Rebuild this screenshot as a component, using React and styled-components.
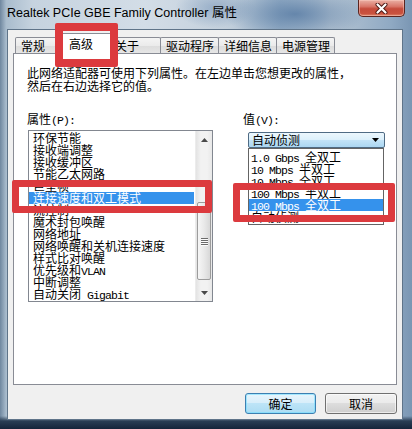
import React from "react";
import styled, { createGlobalStyle } from "styled-components";

const Global = createGlobalStyle`
  html, body { margin: 0; padding: 0; }
  body {
    width: 412px;
    height: 429px;
    overflow: hidden;
    font-family: "Noto Sans CJK SC", "Noto Sans", sans-serif;
  }
  #root { width: 412px; height: 429px; }
`;

const CJK = `"Noto Sans CJK SC", "Noto Sans", sans-serif`;

const Frame = styled.div`
  position: relative;
  box-sizing: border-box;
  width: 412px;
  height: 429px;
  display: flex;
  flex-direction: column;
  padding: 0 9px 9px 7px;
  overflow: hidden;
  background:
    linear-gradient(180deg, rgba(0,0,0,0) 0, rgba(0,0,0,0) 416px, #2a3e55 421px, #15243a 429px),
    radial-gradient(70px 26px at 295px 14px, rgba(90,125,165,0.85), rgba(90,125,165,0)),
    radial-gradient(40px 20px at 215px 8px, rgba(120,150,185,0.6), rgba(120,150,185,0)),
    linear-gradient(90deg, #6f879f 0, #a9bccd 1.5%, #c6d3df 8%, #d3dde7 35%, #c3d0dc 55%, #9fb6cc 68%, #b7c6d4 80%, #8fa9c3 95%, #7a96b3 100%);
`;

const TitleBar = styled.div`
  height: 29px;
  flex: none;
  display: flex;
  align-items: flex-start;
`;

const TitleText = styled.div`
  padding-top: 6px;
  font-family: "Liberation Sans", Arial, ${CJK};
  font-size: 12.5px;
  line-height: 15px;
  color: #000;
  white-space: nowrap;
`;

const CloseButton = styled.div`
  margin-left: auto;
  margin-right: -2px;
  width: 47px;
  height: 17px;
  box-sizing: border-box;
  border: 1px solid #5b2520;
  border-top: none;
  border-radius: 0 0 5px 5px;
  background: linear-gradient(180deg, #eab0a4 0%, #d9776a 40%, #c54b3b 55%, #c9523f 85%, #e08a6e 100%);
  box-shadow: inset 0 0 0 1px rgba(255, 210, 200, 0.45);
  display: flex;
  align-items: center;
  justify-content: center;
`;

const Client = styled.div`
  flex: 1;
  min-height: 0;
  display: flex;
  flex-direction: column;
  border: 1px solid #5f7489;
  background: #f0f0f0;
  padding: 3px 5px 5px 5px;
`;

const TabStrip = styled.div`
  height: 20px;
  flex: none;
  display: flex;
  align-items: flex-end;
  padding-left: 2px;
`;

const Tab = styled.div`
  position: relative;
  box-sizing: border-box;
  width: ${(p) => p.$w}px;
  height: ${(p) => (p.$active ? 21 : 16)}px;
  margin: ${(p) => (p.$active ? "0 -2px -1px -2px" : p.$first ? "0" : "0 0 0 -1px")};
  padding: ${(p) => (p.$active ? "2px 0 0 8px" : "0 0 0 5px")};
  border: 1px solid #898c95;
  border-bottom: none;
  border-radius: 2px 2px 0 0;
  background: ${(p) =>
    p.$active ? "#ffffff" : "linear-gradient(180deg, #f4f4f4 0%, #ebebeb 50%, #dcdcdc 51%, #e6e6e6 100%)"};
  z-index: ${(p) => (p.$active ? 2 : 1)};
  font-family: ${CJK};
  font-size: 12px;
  line-height: 15px;
  color: #000;
  white-space: nowrap;
`;

const Panel = styled.div`
  flex: none;
  height: 332px;
  box-sizing: border-box;
  border: 1px solid #898c95;
  background: #ffffff;
  padding: 12px 0 0 13px;
  display: flex;
  flex-direction: column;
`;

const Description = styled.div`
  font-family: ${CJK};
  font-size: 12px;
  line-height: 13px;
  color: #000;
  white-space: nowrap;
`;

const Columns = styled.div`
  display: flex;
  margin-top: 21px;
`;

const LeftCol = styled.div`
  width: 186px;
  display: flex;
  flex-direction: column;
`;

const RightCol = styled.div`
  margin-left: 30px;
  display: flex;
  flex-direction: column;
`;

const Label = styled.div`
  font-family: ${CJK};
  font-size: 12px;
  line-height: 12px;
  color: #000;
  white-space: nowrap;
`;

const Latin = styled.span`
  font-family: "Liberation Mono", "DejaVu Sans Mono", monospace;
  font-size: 11.5px;
  letter-spacing: -0.9px;
`;

function Mixed({ text }) {
  const parts = text.split(/([\x20-\x7e]+)/).filter(Boolean);
  return parts.map((p, i) =>
    /^[\x20-\x7e]+$/.test(p) ? <Latin key={i}>{p}</Latin> : <React.Fragment key={i}>{p}</React.Fragment>
  );
}

const ListBox = styled.div`
  margin: 3px 0 0 1px;
  width: 185px;
  height: 172px;
  box-sizing: border-box;
  border: 1px solid #828790;
  background: #fff;
  display: flex;
`;

const Items = styled.div`
  flex: 1;
  padding-top: 1px;
  padding-right: 1px;
  overflow: hidden;
`;

const Item = styled.div`
  height: 12px;
  padding-left: ${(p) => p.$pad}px;
  font-family: ${CJK};
  font-size: 12px;
  line-height: 12px;
  white-space: nowrap;
  color: ${(p) => (p.$selected ? "#ffffff" : "#000000")};
  background: ${(p) => (p.$selected ? "#3592ec" : "transparent")};
`;

const ScrollBar = styled.div`
  width: 16px;
  display: flex;
  flex-direction: column;
  background: linear-gradient(90deg, #e3e3e3 0%, #f2f2f2 30%, #f2f2f2 70%, #e8e8e8 100%);
  border-left: 1px solid #ececec;
`;

const ArrowButton = styled.div`
  height: 17px;
  flex: none;
  display: flex;
  align-items: center;
  justify-content: center;
`;

const Track = styled.div`
  flex: 1;
  display: flex;
  flex-direction: column;
  padding: ${(p) => p.$top}px 1px 0 1px;
`;

const Thumb = styled.div`
  height: ${(p) => p.$h}px;
  box-sizing: border-box;
  border: 1px solid #9c9c9c;
  border-radius: 2px;
  background: linear-gradient(90deg, #f6f6f6 0%, #e9e9e9 50%, #d8d8d8 100%);
  display: flex;
  flex-direction: column;
  align-items: center;
  justify-content: center;
  gap: 1px;
`;

const Grip = styled.div`
  width: 7px;
  height: 1px;
  background: #6b6b6b;
  box-shadow: 0 1px 0 #fbfbfb;
`;

const ComboWrap = styled.div`
  position: relative;
  margin: 5px 0 0 5px;
  width: 137px;
`;

const Combo = styled.div`
  height: 16px;
  box-sizing: border-box;
  border: 1px solid #4f6b84;
  border-radius: 2px;
  background: linear-gradient(180deg, #ecf7fd 0%, #dcf0fb 48%, #c2e3f7 52%, #abd6f1 100%);
  display: flex;
  align-items: center;
  padding: 0 5px 0 3px;
  font-family: ${CJK};
  font-size: 12px;
  line-height: 14px;
  color: #000;
`;

const ComboText = styled.span`
  flex: 1;
`;

const DropList = styled.div`
  position: absolute;
  top: 16px;
  left: 0;
  width: 136px;
  box-sizing: border-box;
  border: 1px solid #646464;
  background: #fff;
  padding: 2px 0 1px 0;
  z-index: 3;
`;

const ButtonRow = styled.div`
  display: flex;
  justify-content: flex-end;
  gap: 9px;
  margin-top: 8px;
`;

const Button = styled.div`
  width: ${(p) => p.$w}px;
  height: 21px;
  box-sizing: border-box;
  border: 1px solid ${(p) => (p.$primary ? "#3c7fb1" : "#707070")};
  border-radius: 3px;
  background: ${(p) =>
    p.$primary
      ? "linear-gradient(180deg, #e8f5fc 0%, #d8eefa 45%, #bde4f7 50%, #acdcf3 100%)"
      : "linear-gradient(180deg, #f2f2f2 0%, #ebebeb 45%, #dddddd 50%, #cfcfcf 100%)"};
  box-shadow: inset 0 0 0 1px ${(p) => (p.$primary ? "rgba(110,220,255,0.55)" : "rgba(255,255,255,0.6)")};
  display: flex;
  align-items: center;
  justify-content: center;
  font-family: ${CJK};
  font-size: 12px;
  color: #000;
`;

const Mark = styled.div`
  position: absolute;
  left: ${(p) => p.$x}px;
  top: ${(p) => p.$y}px;
  width: ${(p) => p.$w}px;
  height: ${(p) => p.$h}px;
  box-sizing: border-box;
  border: ${(p) => p.$t}px solid #dc3a3e;
  border-radius: 2px;
  z-index: 10;
`;

const tabs = [
  { label: "常规", w: 47 },
  { label: "高级", w: 52, active: true },
  { label: "关于", w: 52 },
  { label: "驱动程序", w: 59 },
  { label: "详细信息", w: 59 },
  { label: "电源管理", w: 59 },
];

const properties = [
  "环保节能",
  "接收端调整",
  "接收缓冲区",
  "节能乙太网路",
  "巨型帧",
  "连接速度和双工模式",
  "流控制",
  "魔术封包唤醒",
  "网络地址",
  "网络唤醒和关机连接速度",
  "样式比对唤醒",
  "优先级和VLAN",
  "中断调整",
  "自动关闭 Gigabit",
];

const values = [
  "1.0 Gbps 全双工",
  "10 Mbps 半双工",
  "10 Mbps 全双工",
  "100 Mbps 半双工",
  "100 Mbps 全双工",
  "自动侦测",
];

const Arrow = ({ up }) => (
  <svg width="7" height="4" viewBox="0 0 7 4">
    <path d={up ? "M0 4 L3.5 0 L7 4 Z" : "M0 0 L7 0 L3.5 4 Z"} fill="#4a4a4a" />
  </svg>
);

export default function App() {
  return (
    <>
      <Global />
      <Frame>
        <TitleBar>
          <TitleText>Realtek PCIe GBE Family Controller 属性</TitleText>
          <CloseButton>
            <svg width="13" height="11" viewBox="0 0 13 11">
              <path d="M2.5 1.5 L10.5 9.5 M10.5 1.5 L2.5 9.5" stroke="#4a1712" strokeWidth="4" strokeLinecap="round" />
              <path d="M2.5 1.5 L10.5 9.5 M10.5 1.5 L2.5 9.5" stroke="#ffffff" strokeWidth="2.2" strokeLinecap="round" />
            </svg>
          </CloseButton>
        </TitleBar>
        <Client>
          <TabStrip>
            {tabs.map((t, i) => (
              <Tab key={t.label} $w={t.w} $active={t.active} $first={i === 0}>
                {t.label}
              </Tab>
            ))}
          </TabStrip>
          <Panel>
            <Description>
              <div>此网络适配器可使用下列属性。在左边单击您想更改的属性，</div>
              <div>然后在右边选择它的值。</div>
            </Description>
            <Columns>
              <LeftCol>
                <Label>
                  <Mixed text="属性(P):" />
                </Label>
                <ListBox>
                  <Items>
                    {properties.map((p, i) => (
                      <Item key={p} $pad={4} $selected={i === 5}>
                        <Mixed text={p} />
                      </Item>
                    ))}
                  </Items>
                  <ScrollBar>
                    <ArrowButton>
                      <Arrow up />
                    </ArrowButton>
                    <Track $top={54}>
                      <Thumb $h={78}>
                        <Grip />
                        <Grip />
                        <Grip />
                        <Grip />
                      </Thumb>
                    </Track>
                    <ArrowButton>
                      <Arrow />
                    </ArrowButton>
                  </ScrollBar>
                </ListBox>
              </LeftCol>
              <RightCol>
                <Label>
                  <Mixed text="值(V):" />
                </Label>
                <ComboWrap>
                  <Combo>
                    <ComboText>自动侦测</ComboText>
                    <svg width="7" height="4" viewBox="0 0 7 4">
                      <path d="M0 0 L7 0 L3.5 4 Z" fill="#000" />
                    </svg>
                  </Combo>
                  <DropList>
                    {values.map((v, i) => (
                      <Item key={v} $pad={2} $selected={i === 4}>
                        <Mixed text={v} />
                      </Item>
                    ))}
                  </DropList>
                </ComboWrap>
              </RightCol>
            </Columns>
          </Panel>
          <ButtonRow>
            <Button $w={71} $primary>
              确定
            </Button>
            <Button $w={72}>取消</Button>
          </ButtonRow>
        </Client>
        <Mark $x={55} $y={23} $w={63} $h={44} $t={8} />
        <Mark $x={12} $y={180} $w={200} $h={33} $t={7} />
        <Mark $x={233} $y={183} $w={162} $h={39} $t={7} />
      </Frame>
    </>
  );
}
